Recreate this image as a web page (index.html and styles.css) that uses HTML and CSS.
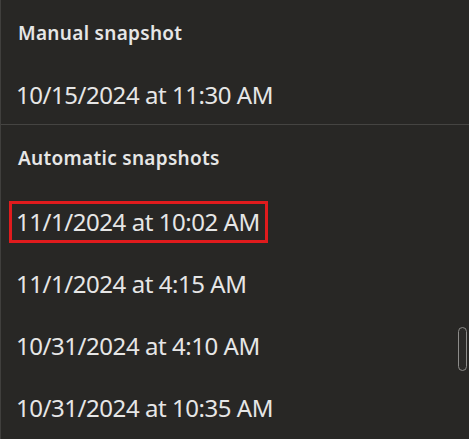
FILE: index.html
```html
<!DOCTYPE html>
<html lang="en">
<head>
<meta charset="utf-8">
<title>Snapshots</title>
<link rel="stylesheet" href="styles.css">
</head>
<body>
<div class="panel">
  <section class="group">
    <div class="group-title">Manual snapshot</div>
    <div class="item item-first">10/15/2024 at 11:30 AM</div>
  </section>
  <section class="group group-auto">
    <div class="group-title">Automatic snapshots</div>
    <div class="item"><span class="marked">11/1/2024 at 10:02 AM</span></div>
    <div class="item">11/1/2024 at 4:15 AM</div>
    <div class="item">10/31/2024 at 4:10 AM</div>
    <div class="item">10/31/2024 at 10:35 AM</div>
  </section>
  <div class="scroll-thumb"></div>
</div>
</body>
</html>
```
FILE: styles.css
```css
html, body {
  margin: 0;
  padding: 0;
  background: #282725;
}
body {
  width: 469px;
  height: 439px;
  overflow: hidden;
  font-family: "Noto Sans", "Open Sans", sans-serif;
  color: #e6e6e6;
}
.panel {
  position: relative;
  height: 439px;
  border-left: 1px solid #403f3d;
  box-sizing: border-box;
}
.group-auto {
  border-top: 1px solid #454442;
}
.group-title {
  height: 66px;
  display: flex;
  align-items: center;
  padding-left: 17px;
  font-size: 19px;
  font-weight: 600;
  line-height: 24px;
  letter-spacing: 0.3px;
}
.item {
  height: 62px;
  display: flex;
  align-items: center;
  padding-left: 15px;
  font-size: 24px;
  line-height: 32px;
  letter-spacing: -0.45px;
}
.item-first {
  height: 58px;
}
.marked {
  border: 3px solid #e01b1d;
  padding: 2px 5px 2px 4px;
  margin-left: -7px;
}
.scroll-thumb {
  position: absolute;
  left: 457px;
  top: 327px;
  width: 7px;
  height: 42px;
  border: 1px solid #8d8c8a;
  border-radius: 5px;
  background: #2a2927;
}
```
